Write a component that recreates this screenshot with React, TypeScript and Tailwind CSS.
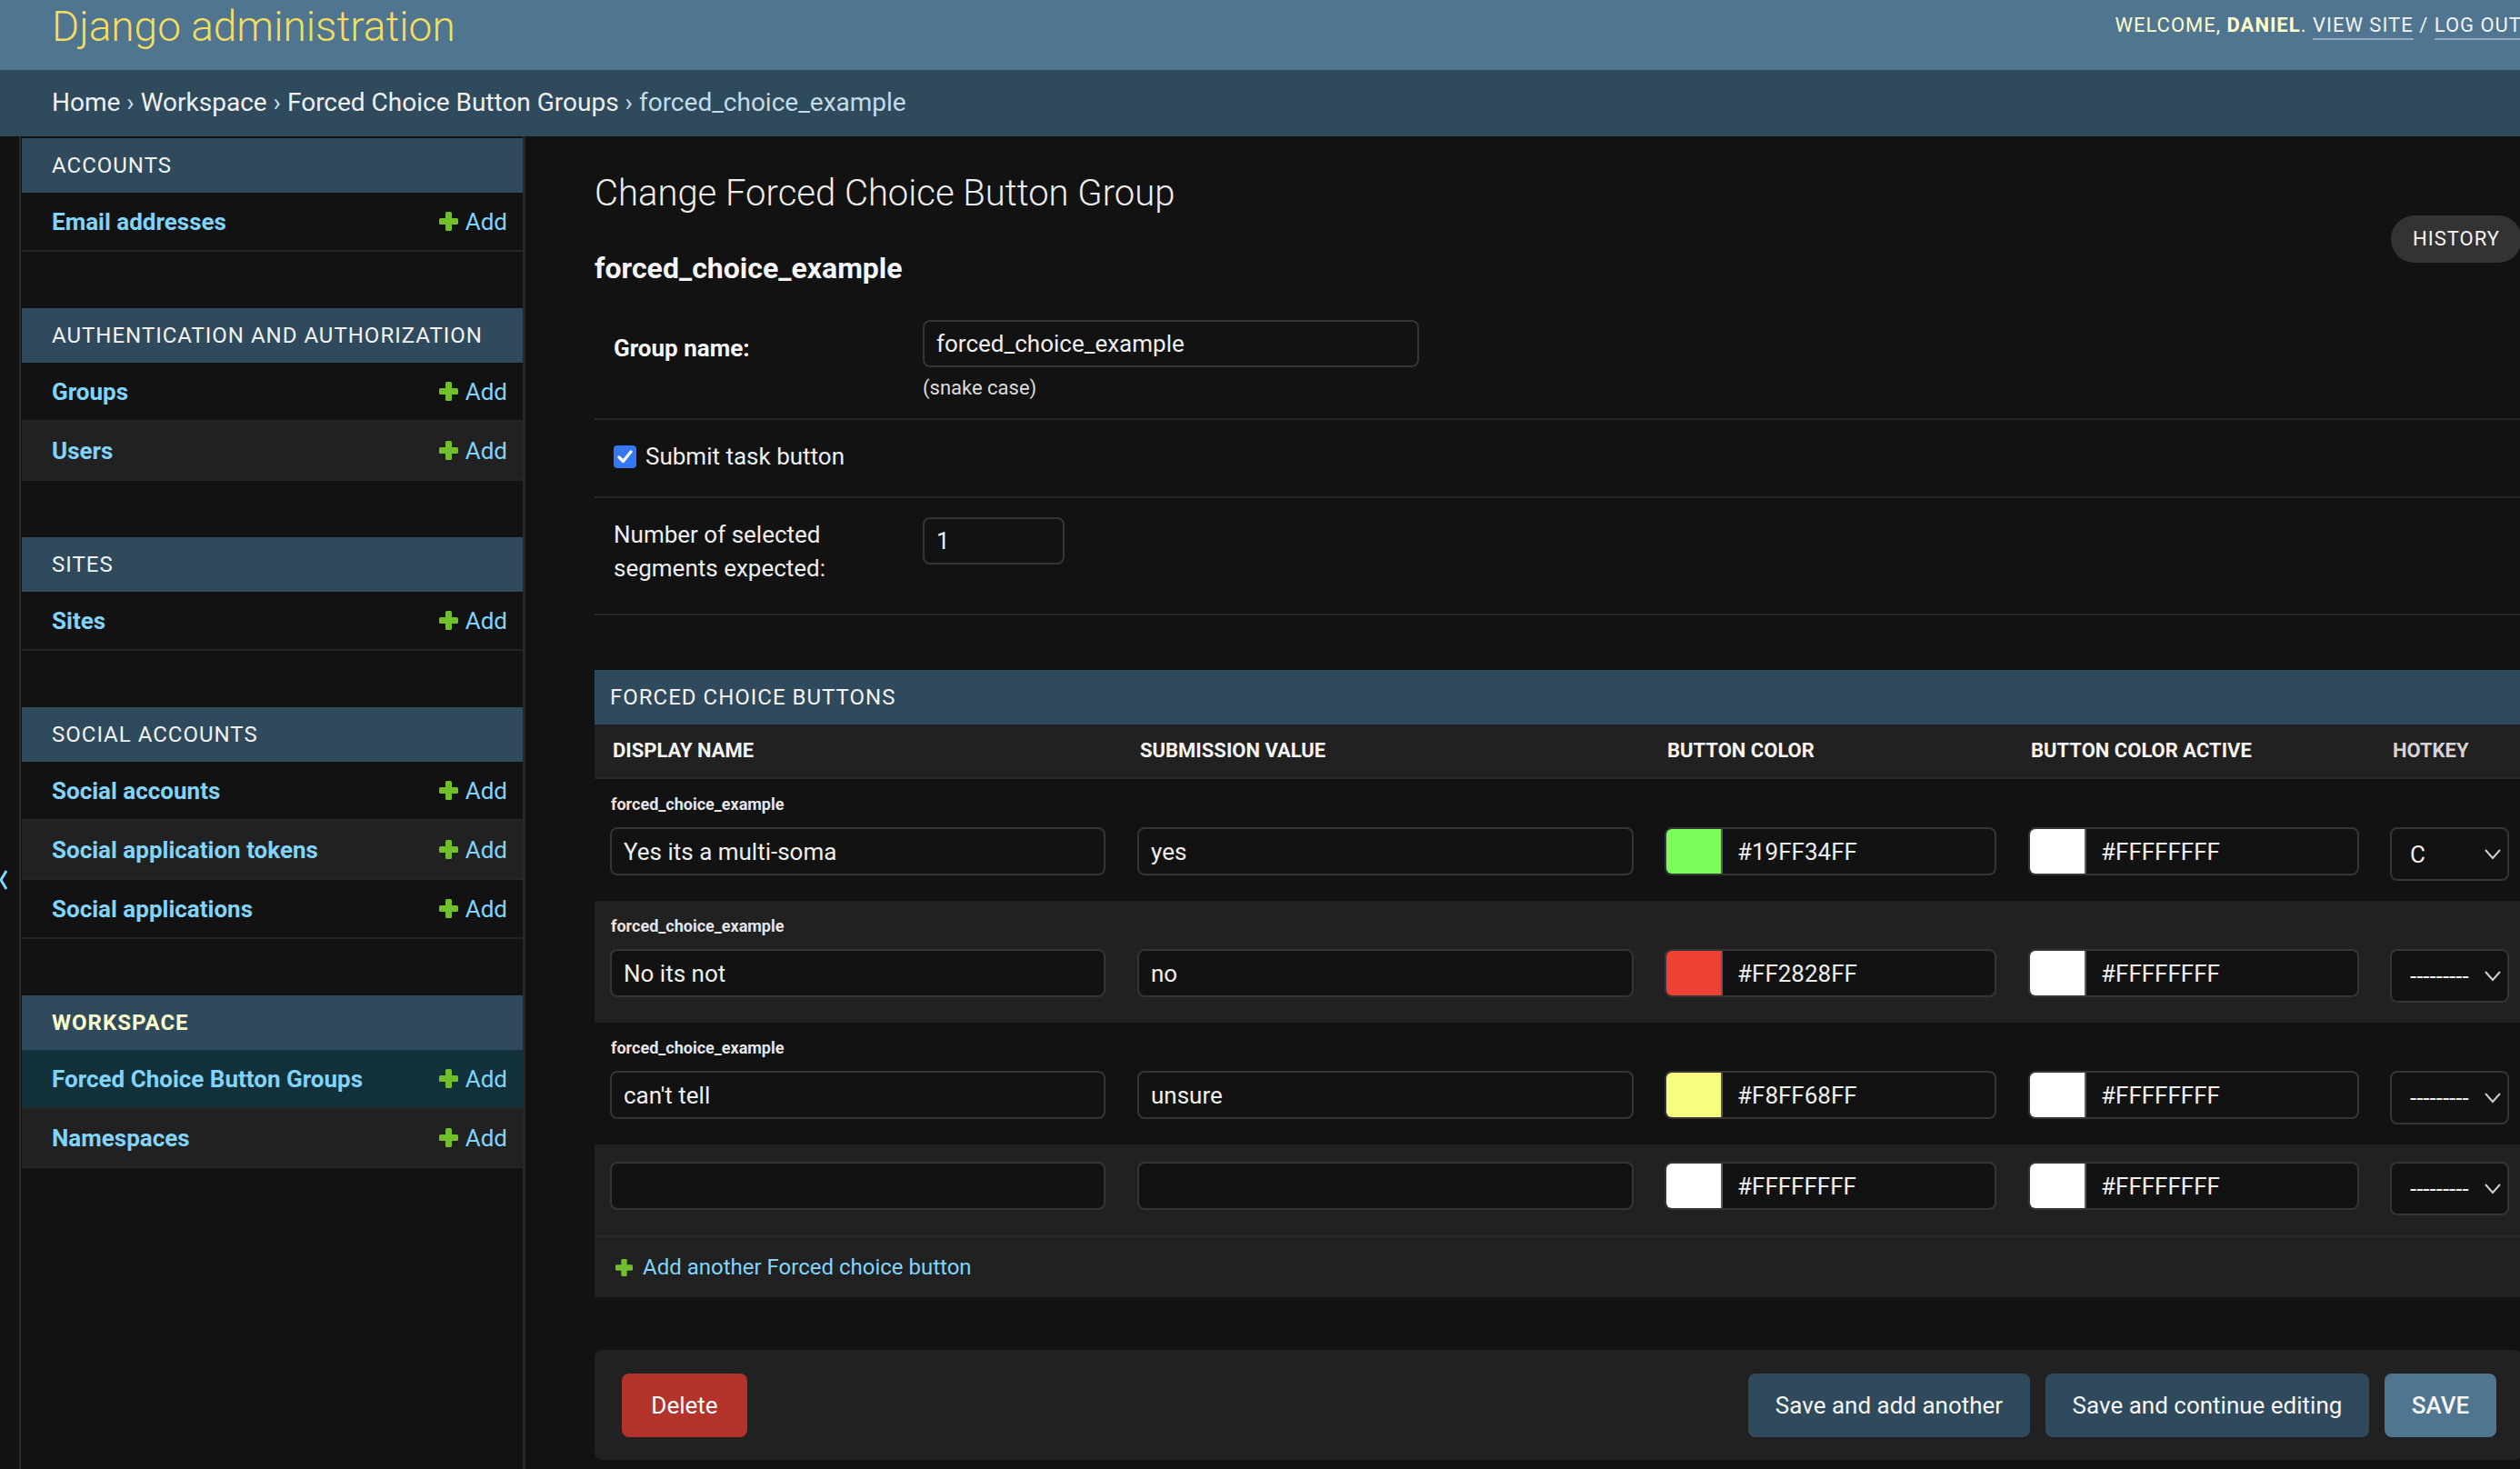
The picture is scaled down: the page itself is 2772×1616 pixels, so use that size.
import React from 'react';

const Plus = ({ size = 21 }: { size?: number }) => (
  <svg width={size} height={size} viewBox="0 0 21 21" className="shrink-0">
    <rect x="7" y="0" width="7" height="21" rx="1.5" fill="#70bf2b" />
    <rect x="0" y="7" width="21" height="7" rx="1.5" fill="#70bf2b" />
  </svg>
);

const Chevron = () => (
  <svg width="18" height="12" viewBox="0 0 18 12" className="shrink-0">
    <polyline points="1,1 9,10 17,1" fill="none" stroke="#d0d0d0" strokeWidth="2" />
  </svg>
);

type SideRow = { name: string; bg: string };
type SideModule = { title: string; current?: boolean; rows: SideRow[] };

const modules: SideModule[] = [
  { title: 'Accounts', rows: [{ name: 'Email addresses', bg: 'bg-[#121212]' }] },
  {
    title: 'Authentication and Authorization',
    rows: [
      { name: 'Groups', bg: 'bg-[#121212]' },
      { name: 'Users', bg: 'bg-[#212121]' },
    ],
  },
  { title: 'Sites', rows: [{ name: 'Sites', bg: 'bg-[#121212]' }] },
  {
    title: 'Social Accounts',
    rows: [
      { name: 'Social accounts', bg: 'bg-[#121212]' },
      { name: 'Social application tokens', bg: 'bg-[#212121]' },
      { name: 'Social applications', bg: 'bg-[#121212]' },
    ],
  },
  {
    title: 'Workspace',
    current: true,
    rows: [
      { name: 'Forced Choice Button Groups', bg: 'bg-[#12313a]' },
      { name: 'Namespaces', bg: 'bg-[#212121]' },
    ],
  },
];

function Header() {
  return (
    <header className="h-[77px] bg-[#4f7590] flex items-start justify-between pl-[57px] pr-[80px]">
      <div className="mt-[6px] text-[46px] leading-none font-light text-[#f5dd5d] whitespace-nowrap">
        Django administration
      </div>
      <div className="mt-[17px] text-[22px] leading-none tracking-[1px] text-[#ffffcc] uppercase whitespace-nowrap flex items-start">
        <span>Welcome,&nbsp;</span>
        <strong className="font-bold">Daniel</strong>
        <span>.&nbsp;</span>
        <span className="text-[#f2f2f2] pb-[3px] border-b-2 border-[#93a9b9]">View site</span>
        <span className="text-[#f2f2f2]">&nbsp;/&nbsp;</span>
        <span className="text-[#f2f2f2] pb-[3px] border-b-2 border-[#93a9b9]">Log out</span>
      </div>
    </header>
  );
}

function Breadcrumbs() {
  return (
    <div className="h-[73px] bg-[#2f4a5c] pl-[57px] pt-[22px] text-[28px] leading-none whitespace-nowrap">
      <span className="text-[#f0f0f0]">Home</span>
      <span className="text-[#c4dce8]"> › </span>
      <span className="text-[#f0f0f0]">Workspace</span>
      <span className="text-[#c4dce8]"> › </span>
      <span className="text-[#f0f0f0]">Forced Choice Button Groups</span>
      <span className="text-[#c4dce8]"> › forced_choice_example</span>
    </div>
  );
}

function Toggle() {
  return (
    <div className="w-[23px] h-[1466px] shrink-0 border-r-2 border-[#2a2a2a]">
      <div className="mt-[807px]">
        <svg width="8" height="22" viewBox="0 0 8 22">
          <polyline points="7,1 1,11 7,21" fill="none" stroke="#81d4fa" strokeWidth="3" />
        </svg>
      </div>
    </div>
  );
}

function Sidebar() {
  return (
    <nav className="w-[555px] h-[1466px] shrink-0 pl-[1px] pt-[2px] border-r-[3px] border-[#272727]">
      {modules.map((m) => (
        <div key={m.title} className="mb-[62px]">
          <div className="h-[60px] bg-[#2f4a5c] flex items-center pl-[33px]">
            {m.current ? (
              <span className="text-[24px] leading-none uppercase tracking-[1px] font-bold text-[#ffffcc]">
                {m.title}
              </span>
            ) : (
              <span className="text-[24px] leading-none uppercase tracking-[1px] text-[#f2f2f2]">{m.title}</span>
            )}
          </div>
          {m.rows.map((r) => (
            <div
              key={r.name}
              className={`h-[65px] flex items-center justify-between border-b-2 border-[#262626] pl-[33px] pr-[17px] ${r.bg}`}
            >
              <span className="text-[26px] leading-none font-bold text-[#81d4fa]">{r.name}</span>
              <span className="flex items-center gap-[8px] text-[26px] leading-none text-[#81d4fa]">
                <Plus />
                Add
              </span>
            </div>
          ))}
        </div>
      ))}
    </nav>
  );
}

const inputBox = 'border-2 border-[#353535] rounded-[8px] bg-[#121212] flex items-center';

function TextInput({ value, w }: { value: string; w: string }) {
  return (
    <div className={`h-[53px] ${w} ${inputBox} px-[13px] text-[26px] leading-none text-[#eeeeee] whitespace-nowrap`}>
      {value}
    </div>
  );
}

function ColorInput({ hex, swatch, w }: { hex: string; swatch: string; w: string }) {
  return (
    <div className={`h-[53px] ${w} ${inputBox} overflow-hidden`}>
      <div className={`h-full w-[62px] shrink-0 border-r-2 border-[#5a5a5a] ${swatch}`} />
      <span className="ml-[16px] text-[26px] leading-none text-[#eeeeee]">{hex}</span>
    </div>
  );
}

function SelectInput({ value }: { value: string }) {
  return (
    <div className={`h-[59px] w-[131px] ${inputBox} justify-between pl-[20px] pr-[7px]`}>
      <span className="text-[26px] leading-none text-[#eeeeee]">{value}</span>
      <Chevron />
    </div>
  );
}

type InlineRow = {
  label?: string;
  display: string;
  value: string;
  color: string;
  colorSwatch: string;
  active: string;
  activeSwatch: string;
  hotkey: string;
  bg: string;
};

const rows: InlineRow[] = [
  {
    label: 'forced_choice_example',
    display: 'Yes its a multi-soma',
    value: 'yes',
    color: '#19FF34FF',
    colorSwatch: 'bg-[#7bfc5b]',
    active: '#FFFFFFFF',
    activeSwatch: 'bg-[#ffffff]',
    hotkey: 'C',
    bg: 'bg-[#121212]',
  },
  {
    label: 'forced_choice_example',
    display: 'No its not',
    value: 'no',
    color: '#FF2828FF',
    colorSwatch: 'bg-[#ec4134]',
    active: '#FFFFFFFF',
    activeSwatch: 'bg-[#ffffff]',
    hotkey: '---------',
    bg: 'bg-[#212121]',
  },
  {
    label: 'forced_choice_example',
    display: "can't tell",
    value: 'unsure',
    color: '#F8FF68FF',
    colorSwatch: 'bg-[#f9fd7f]',
    active: '#FFFFFFFF',
    activeSwatch: 'bg-[#ffffff]',
    hotkey: '---------',
    bg: 'bg-[#121212]',
  },
  {
    display: '',
    value: '',
    color: '#FFFFFFFF',
    colorSwatch: 'bg-[#ffffff]',
    active: '#FFFFFFFF',
    activeSwatch: 'bg-[#ffffff]',
    hotkey: '---------',
    bg: 'bg-[#212121]',
  },
];

const gridCols = 'grid grid-cols-[580px_580px_400px_398px_165px_200px]';

function InlineGroup() {
  return (
    <div className="mt-[60px] w-[2330px]">
      <div className="h-[60px] bg-[#2f4a5c] flex items-center pl-[17px] text-[24px] leading-none uppercase tracking-[1px] text-[#f2f2f2]">
        Forced Choice Buttons
      </div>
      <div className={`${gridCols} h-[60px] items-center bg-[#212121] border-b-2 border-[#272727] text-[22px] leading-none font-bold uppercase text-[#f5f5f5]`}>
        <div className="pl-[20px]">Display name</div>
        <div className="pl-[20px]">Submission value</div>
        <div className="pl-[20px]">Button color</div>
        <div className="pl-[20px]">Button color active</div>
        <div className="pl-[20px] text-[#d4d4d4]">Hotkey</div>
        <div />
      </div>
      {rows.map((r, i) => (
        <div key={i} className={`pt-[19px] pb-[22px] ${r.bg}`}>
          {r.label && (
            <div className="h-[34px] pl-[18px] text-[18px] leading-none font-bold text-[#e6e6e6]">{r.label}</div>
          )}
          <div className={`${gridCols} items-start`}>
            <div className="pl-[17px]">
              <TextInput value={r.display} w="w-[545px]" />
            </div>
            <div className="pl-[17px]">
              <TextInput value={r.value} w="w-[546px]" />
            </div>
            <div className="pl-[17px]">
              <ColorInput hex={r.color} swatch={r.colorSwatch} w="w-[365px]" />
            </div>
            <div className="pl-[17px]">
              <ColorInput hex={r.active} swatch={r.activeSwatch} w="w-[364px]" />
            </div>
            <div className="pl-[17px]">
              <SelectInput value={r.hotkey} />
            </div>
            <div />
          </div>
        </div>
      ))}
      <div className="h-[68px] bg-[#212121] border-t-2 border-[#2a2a2a] flex items-center pl-[23px] gap-[11px]">
        <Plus size={19} />
        <span className="text-[24px] leading-none text-[#81d4fa]">Add another Forced choice button</span>
      </div>
    </div>
  );
}

function Main() {
  return (
    <main className="w-[2276px] shrink-0 pl-[76px] pr-[80px]">
      <h1 className="mt-[43px] text-[40px] leading-none font-light text-[#eeeeee] whitespace-nowrap">
        Change Forced Choice Button Group
      </h1>
      <div className="mt-[4px] flex items-start justify-between">
        <h2 className="mt-[42px] text-[32px] leading-none font-bold text-[#f5f5f5]">forced_choice_example</h2>
        <div className="h-[52px] px-[24px] rounded-full bg-[#333333] flex items-center text-[22px] leading-none tracking-[1px] text-[#f5f5f5]">
          HISTORY
        </div>
      </div>

      <div className="mt-[20px]">
        <div className="flex pt-[21px] pb-[22px] pl-[21px] border-b-2 border-[#272727]">
          <div className="w-[340px] shrink-0 pt-[18px] text-[26px] leading-none font-bold text-[#f5f5f5]">Group name:</div>
          <div>
            <div className={`h-[52px] w-[546px] ${inputBox} px-[13px] text-[26px] leading-none text-[#eeeeee]`}>
              forced_choice_example
            </div>
            <div className="mt-[12px] text-[22px] leading-none text-[#dddddd]">(snake case)</div>
          </div>
        </div>

        <div className="flex items-center h-[86px] pt-[20px] pb-[24px] pl-[21px] border-b-2 border-[#272727]">
          <div className="w-[25px] h-[25px] rounded-[4px] bg-[#3478f6] flex items-center justify-center">
            <svg width="17" height="15" viewBox="0 0 17 15">
              <polyline points="2,8 6.5,12.5 15,2" fill="none" stroke="#ffffff" strokeWidth="3.2" strokeLinecap="round" strokeLinejoin="round" />
            </svg>
          </div>
          <span className="ml-[10px] text-[26px] leading-none text-[#eeeeee]">Submit task button</span>
        </div>

        <div className="flex pt-[21px] pb-[31px] pl-[21px] border-b-2 border-[#272727]">
          <div className="w-[340px] shrink-0 pr-[20px] pt-[1px] text-[26px] leading-[37px] text-[#eeeeee]">
            Number of selected segments expected:
          </div>
          <div className={`h-[52px] w-[156px] ${inputBox} px-[13px] text-[26px] leading-none text-[#eeeeee]`}>1</div>
        </div>
      </div>

      <InlineGroup />

      <div className="mt-[58px] h-[121px] rounded-[8px] bg-[#212121] flex items-center justify-between pl-[30px] pr-[28px]">
        <div className="h-[70px] w-[138px] rounded-[8px] bg-[#b3322c] flex items-center justify-center text-[26px] leading-none text-[#ffffff]">
          Delete
        </div>
        <div className="flex items-center gap-[17px]">
          <div className="h-[70px] w-[310px] rounded-[8px] bg-[#2f4a5c] flex items-center justify-center text-[26px] leading-none text-[#f5f5f5]">
            Save and add another
          </div>
          <div className="h-[70px] w-[356px] rounded-[8px] bg-[#2f4a5c] flex items-center justify-center text-[26px] leading-none text-[#f5f5f5]">
            Save and continue editing
          </div>
          <div className="h-[70px] w-[123px] rounded-[8px] bg-[#4f7590] flex items-center justify-center text-[26px] leading-none font-medium text-[#f5f5f5]">
            SAVE
          </div>
        </div>
      </div>
    </main>
  );
}

export default function App() {
  return (
    <div className="w-[2772px] h-[1616px] overflow-hidden bg-[#121212] font-[family-name:Roboto,sans-serif] text-[#eeeeee]">
      <div className="w-[2854px]">
        <Header />
        <Breadcrumbs />
        <div className="flex">
          <Toggle />
          <Sidebar />
          <Main />
        </div>
      </div>
    </div>
  );
}
